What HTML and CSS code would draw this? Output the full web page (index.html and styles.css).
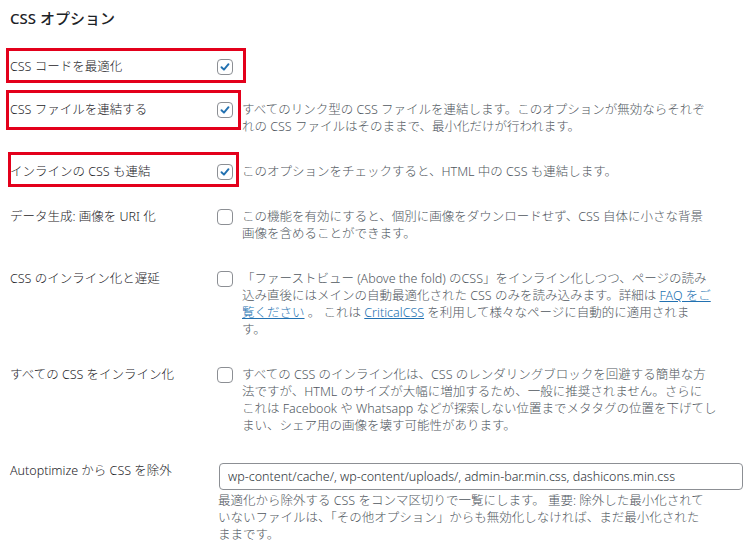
FILE: index.html
```html
<!DOCTYPE html>
<html lang="ja">
<head>
<meta charset="utf-8">
<title>CSS オプション</title>
<link rel="stylesheet" href="styles.css">
</head>
<body>
<h2 class="title">CSS オプション</h2>
<div class="form">
  <div class="row row-first">
    <div class="label">CSS コードを最適化</div>
    <div class="field">
      <span class="cb checked"><svg viewBox="0 0 16 16" width="16" height="16"><path d="M4 8.3 L6.8 11 L12 4.8" fill="none" stroke="#2271b1" stroke-width="2.2" stroke-linecap="round" stroke-linejoin="round"/></svg></span>
    </div>
    <span class="mark mark1"></span>
  </div>
  <div class="row">
    <div class="label">CSS ファイルを連結する</div>
    <div class="field">
      <span class="cb checked"><svg viewBox="0 0 16 16" width="16" height="16"><path d="M4 8.3 L6.8 11 L12 4.8" fill="none" stroke="#2271b1" stroke-width="2.2" stroke-linecap="round" stroke-linejoin="round"/></svg></span>
      <p class="desc">すべてのリンク型の CSS ファイルを連結します。このオプションが無効ならそれぞ<br>れの CSS ファイルはそのままで、最小化だけが行われます。</p>
    </div>
    <span class="mark mark2"></span>
  </div>
  <div class="row">
    <div class="label">インラインの CSS も連結</div>
    <div class="field">
      <span class="cb checked"><svg viewBox="0 0 16 16" width="16" height="16"><path d="M4 8.3 L6.8 11 L12 4.8" fill="none" stroke="#2271b1" stroke-width="2.2" stroke-linecap="round" stroke-linejoin="round"/></svg></span>
      <p class="desc">このオプションをチェックすると、HTML 中の CSS も連結します。</p>
    </div>
    <span class="mark mark3"></span>
  </div>
  <div class="row">
    <div class="label">データ生成: 画像を URI 化</div>
    <div class="field">
      <span class="cb"></span>
      <p class="desc">この機能を有効にすると、個別に画像をダウンロードせず、CSS 自体に小さな背景<br>画像を含めることができます。</p>
    </div>
  </div>
  <div class="row">
    <div class="label">CSS のインライン化と遅延</div>
    <div class="field">
      <span class="cb"></span>
      <p class="desc">「ファーストビュー (Above the fold) のCSS」をインライン化しつつ、ページの読み<br>込み直後にはメインの自動最適化された CSS のみを読み込みます。詳細は <a href="#">FAQ をご<br>覧ください</a> 。 これは <a href="#">CriticalCSS</a> を利用して様々なページに自動的に適用されま<br>す。</p>
    </div>
  </div>
  <div class="row">
    <div class="label">すべての CSS をインライン化</div>
    <div class="field">
      <span class="cb"></span>
      <p class="desc">すべての CSS のインライン化は、CSS のレンダリングブロックを回避する簡単な方<br>法ですが、HTML のサイズが大幅に増加するため、一般に推奨されません。さらに<br>これは Facebook や Whatsapp などが探索しない位置までメタタグの位置を下げてし<br>まい、シェア用の画像を壊す可能性があります。</p>
    </div>
  </div>
  <div class="row">
    <div class="label">Autoptimize から CSS を除外</div>
    <div class="field field-col">
      <input class="text" type="text" value="wp-content/cache/, wp-content/uploads/, admin-bar.min.css, dashicons.min.css">
      <p class="desc note">最適化から除外する CSS をコンマ区切りで一覧にします。 重要: 除外した最小化されて<br>いないファイルは、「その他オプション」からも無効化しなければ、まだ最小化された<br>ままです。</p>
    </div>
  </div>
</div>
</body>
</html>
```

FILE: styles.css
```css
html, body {
  margin: 0;
  padding: 0;
  background: #ffffff;
}

body {
  font-family: "Noto Sans", "Noto Sans CJK JP", sans-serif;
  font-size: 12.5px;
  line-height: 17px;
  font-weight: 300;
  color: #1d2327;
}

.title {
  margin: 8px 0 16px 10px;
  font-size: 15px;
  line-height: 20px;
  font-weight: 500;
  color: #1d2327;
}

.form {
  padding-left: 10px;
}

.row {
  position: relative;
  display: grid;
  grid-template-columns: 207px 1fr;
  padding: 14px 0;
}

.row-first {
  padding-bottom: 12px;
}

.label {
  color: #1d2327;
}

.field {
  display: flex;
  align-items: flex-start;
  gap: 9px;
}

.field-col {
  flex-direction: column;
  gap: 0;
  padding-right: 14px;
}

.cb {
  flex: 0 0 auto;
  box-sizing: border-box;
  width: 16px;
  height: 16px;
  margin-top: 1px;
  border: 1px solid #8c8f94;
  border-radius: 4px;
  background: #ffffff;
  display: flex;
  align-items: center;
  justify-content: center;
}

.cb svg {
  display: block;
  width: 14px;
  height: 14px;
}

.desc {
  margin: 0;
  color: #50575e;
  white-space: nowrap;
}

.desc a {
  color: #2271b1;
  text-decoration: underline;
}

.text {
  box-sizing: border-box;
  width: 100%;
  height: 27px;
  margin: 1px 0 0 2px;
  padding: 0 8px;
  border: 1px solid #8c8f94;
  border-radius: 4px;
  font-family: inherit;
  font-size: 12.5px;
  font-weight: 300;
  color: #2c3338;
  background: #ffffff;
}

.note {
  margin-top: 2px;
  margin-left: 1px;
}

.mark {
  position: absolute;
  box-sizing: border-box;
  border: 3px solid #e3001b;
  pointer-events: none;
}

.mark1 {
  left: -4px;
  top: 4px;
  width: 240px;
  height: 35px;
}

.mark2 {
  left: -4px;
  top: 3px;
  width: 235px;
  height: 40px;
}

.mark3 {
  left: -2px;
  top: 3px;
  width: 231px;
  height: 35px;
}
```
